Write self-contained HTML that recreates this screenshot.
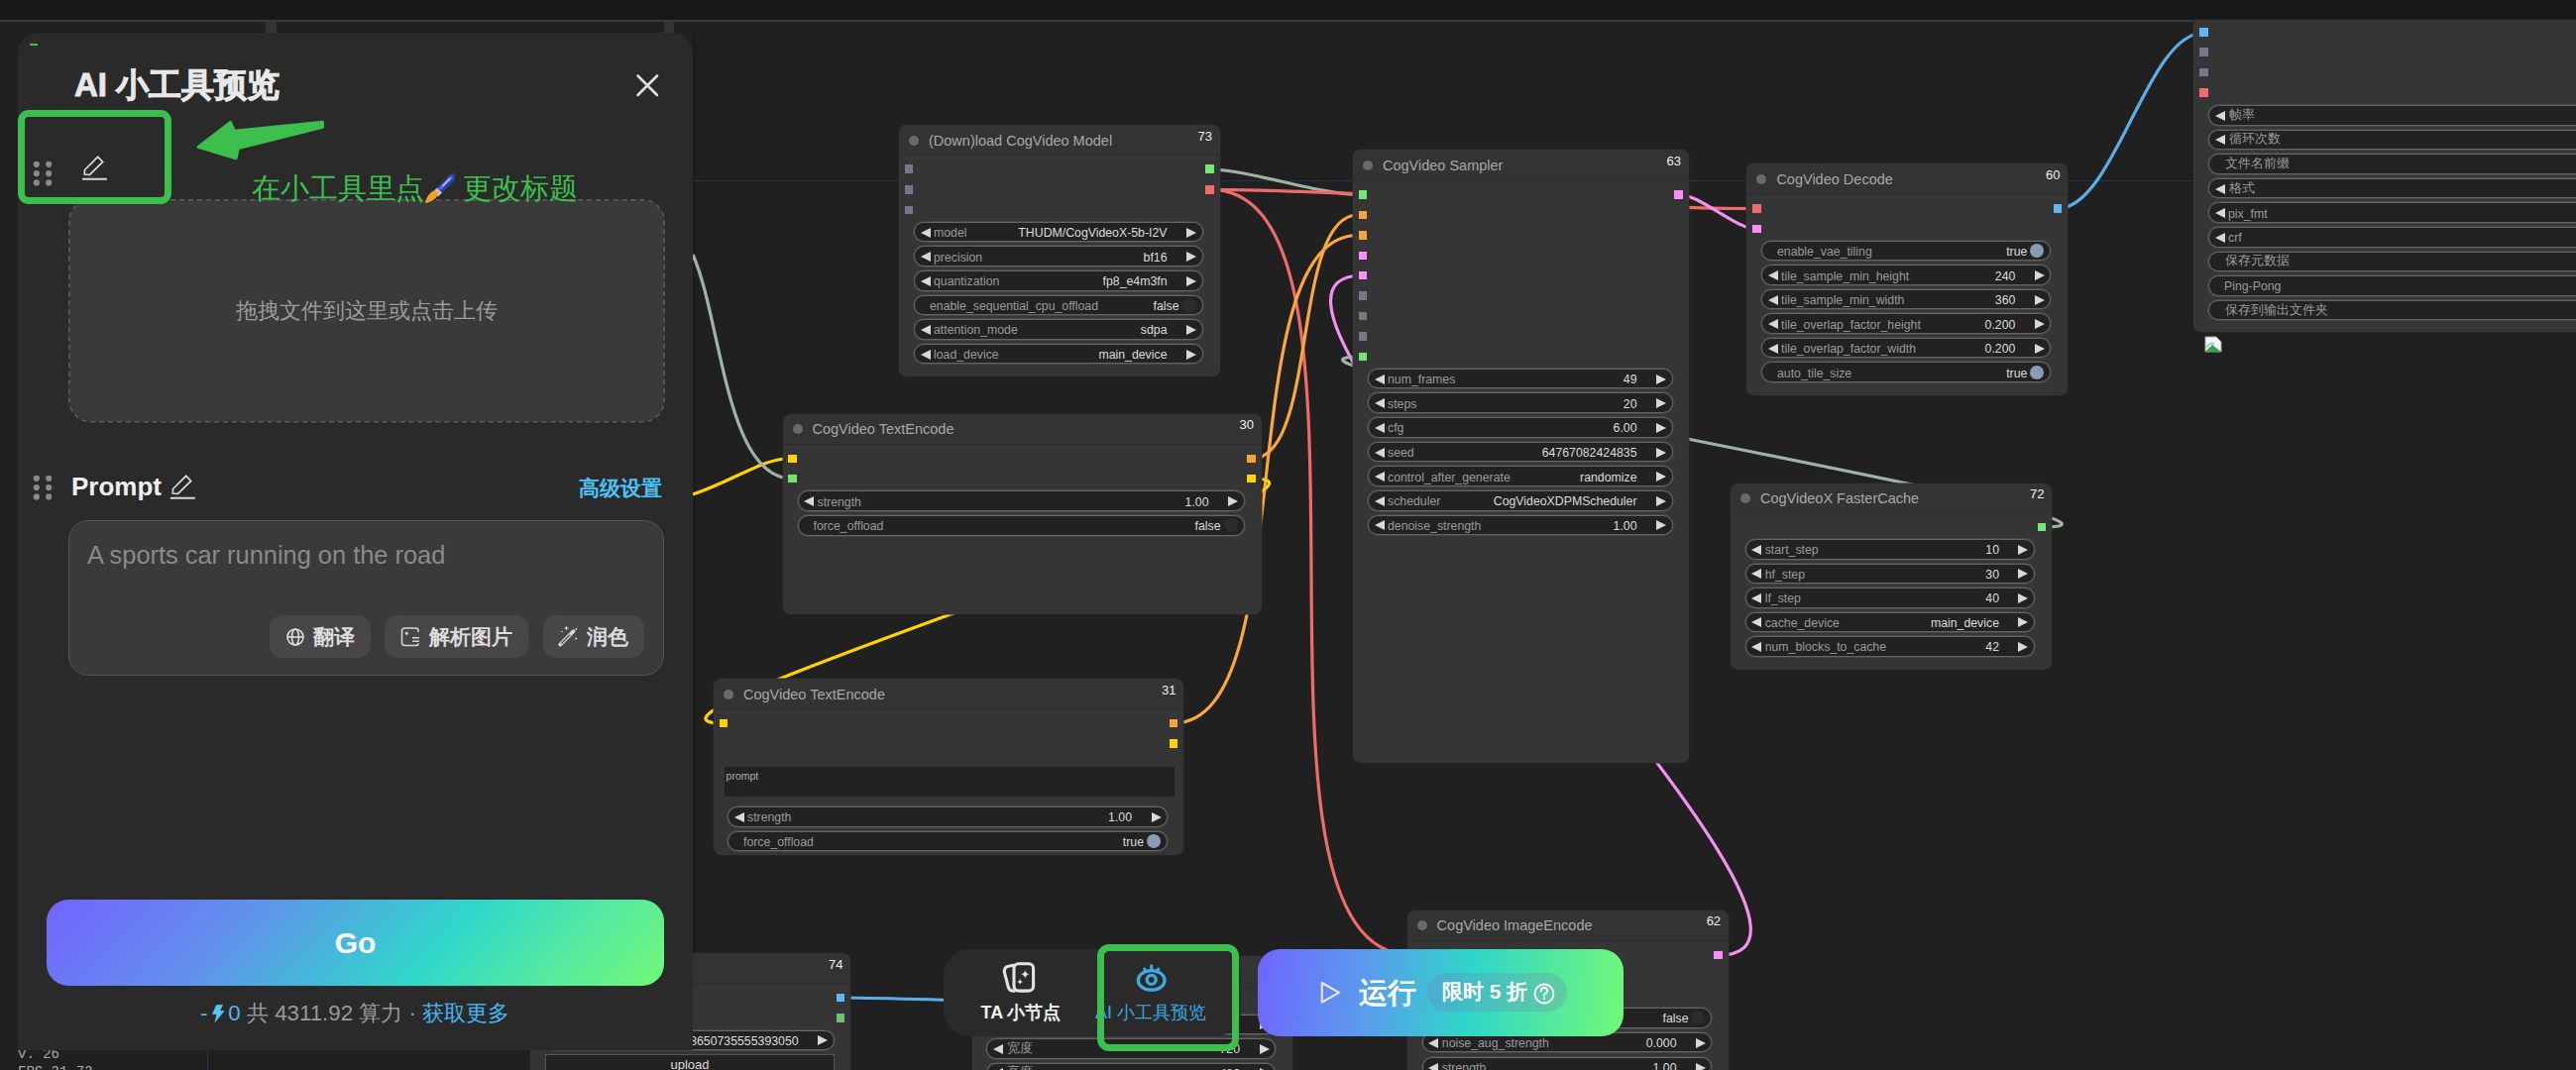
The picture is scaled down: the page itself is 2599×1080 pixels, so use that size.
<!DOCTYPE html><html><head><meta charset="utf-8"><style>
*{box-sizing:border-box;margin:0;padding:0}
html,body{width:2599px;height:1080px;overflow:hidden;background:#202020;font-family:"Liberation Sans", sans-serif}
.abs{position:absolute}
.node{position:absolute;background:#353535;border-radius:8px;overflow:hidden;box-shadow:0 0 0 0.5px #2a2a2a}
.ttl{position:absolute;left:0;top:0;right:0;background:#333333;border-bottom:1px solid #2c2c2c}
.dot{position:absolute;width:10px;height:10px;border-radius:50%;background:#6a6a6a}
.tt{position:absolute;font-size:14.5px;color:#a8a8a8;white-space:nowrap;line-height:18px}
.nid{position:absolute;font-size:13px;color:#f0f0f0;line-height:16px;margin-right:-1.5px}
.slot{position:absolute;width:8.5px;height:8.5px}
.wg{position:absolute;background:#222;border:1px solid #646464;box-shadow:0 0 0 0.7px rgba(85,85,85,0.7);border-radius:11px;font-size:12.3px;color:#9a9a9a;white-space:nowrap}
.wl{position:absolute;top:50%;margin-top:-6px;line-height:14px}
.wv{position:absolute;top:50%;margin-top:-6px;color:#dcdcdc;line-height:14px}
.la{position:absolute;left:5.5px;top:50%;margin-top:-4.5px;width:0;height:0;border-top:5px solid transparent;border-bottom:5px solid transparent;border-right:10px solid #d8d8d8}
.ra{position:absolute;right:5.5px;top:50%;margin-top:-4.5px;width:0;height:0;border-top:5px solid transparent;border-bottom:5px solid transparent;border-left:10px solid #d8d8d8}
.tg{position:absolute;right:6px;top:50%;margin-top:-7px;width:14px;height:14px;border-radius:50%}
</style></head><body>

<div class="abs" style="left:0;top:0;width:2599px;height:20px;background:#181818"></div>
<div class="abs" style="left:0;top:20px;width:2599px;height:2px;background:#3a3a3a"></div>
<div class="abs" style="left:699px;top:33px;width:3px;height:1026px;background:#1c1c1c"></div>
<div class="abs" style="left:699px;top:182px;width:1520px;height:1px;background:#1f3550"></div>
<div class="abs" style="left:209px;top:1059px;width:1px;height:21px;background:#1f3550"></div>
<svg class="abs" style="left:0;top:0" width="2599" height="1080">
<path d="M1221,171 C1258.78736561339,171 1332.21263438661,196.4 1370,196.4" stroke="#9fb3a3" stroke-width="3.2" fill="none"/>
<path d="M1221,191.4 C1357.833340692245,191.4 1631.166659307755,210.5 1768,210.5" stroke="#f06a6a" stroke-width="3.2" fill="none"/>
<path d="M1221,191.4 C1420.7696736244018,191.4 1225.2303263755982,964 1425,964" stroke="#f06a6a" stroke-width="3.2" fill="none"/>
<path d="M1263,463 C1330.0657326807066,463 1302.9342673192934,217 1370,217" stroke="#f9a73e" stroke-width="3.2" fill="none"/>
<path d="M1184,730 C1315.6131286194504,730 1238.3868713805496,237.5 1370,237.5" stroke="#f9a73e" stroke-width="3.2" fill="none"/>
<path d="M1263,483 C1409.9760290829768,483 582.5239709170233,730 729.5,730" stroke="#ffd200" stroke-width="3.2" fill="none"/>
<path d="M699,499 C740,485 770,463 795,463" stroke="#ffd200" stroke-width="3.2" fill="none"/>
<path d="M699,257 C728,322 732,483 799,483" stroke="#9fb3a3" stroke-width="3.2" fill="none"/>
<path d="M1734,964 C1927.5763431439905,964 1181.3236568560096,278 1374.9,278" stroke="#f590f0" stroke-width="3.2" fill="none"/>
<path d="M2060,532 C2236.5902761337666,532 1198.3097238662333,360 1374.9,360" stroke="#9fb3a3" stroke-width="3.2" fill="none"/>
<path d="M1694,196.4 C1715.332428366222,196.4 1750.667571633778,231 1772,231" stroke="#f590f0" stroke-width="3.2" fill="none"/>
<path d="M2076,210.5 C2133.6966745142213,210.5 2165.8033254857787,33 2223.5,33" stroke="#5aaee8" stroke-width="3.2" fill="none"/>
<path d="M848,1007 C886.0074005951473,1007 961.9925994048527,1010 1000,1010" stroke="#5aaee8" stroke-width="3.2" fill="none"/>
</svg>
<div class="node" style="left:535.0px;top:962.0px;width:323.0px;height:138.0px">
<div class="ttl" style="height:31.5px"></div>
<div class="nid" style="right:9px;top:3.8px">74</div>
</div>
<div class="slot" style="left:843.75px;top:1002.75px;background:#64b5f6"></div>
<div class="slot" style="left:843.75px;top:1023.25px;background:#6cc46c"></div>
<div class="wg" style="left:550.0px;top:1039.5px;width:291.6px;height:20.5px">
<span class="wv" style="right:35px">3650735555393050</span><div class="ra"></div>
</div>
<div class="abs" style="left:550px;top:1064px;width:292px;height:30px;background:#222;border:1px solid #555;color:#ddd;font-size:13px;text-align:center;line-height:14px;padding-top:2.5px">upload</div>
<div class="node" style="left:981.0px;top:965.0px;width:323.0px;height:135.0px">
<div class="ttl" style="height:33.0px"></div>
</div>
<div class="wg" style="left:995.0px;top:1023.5px;width:292.0px;height:20.5px">
<div class="la"></div><span class="wl" style="left:19px"></span><span class="wv" style="right:35px"></span><div class="ra"></div>
</div>
<div class="wg" style="left:995.0px;top:1048.0px;width:292.0px;height:20.5px">
<div class="la"></div><span class="wl" style="left:19px;margin-top:-7.5px;font-size:12.7px;margin-left:1px">宽度</span><span class="wv" style="right:35px">720</span><div class="ra"></div>
</div>
<div class="wg" style="left:995.0px;top:1072.5px;width:292.0px;height:20.5px">
<div class="la"></div><span class="wl" style="left:19px;margin-top:-7.5px;font-size:12.7px;margin-left:1px">高度</span><span class="wv" style="right:35px">480</span><div class="ra"></div>
</div>
<div class="node" style="left:907.0px;top:126.0px;width:323.5px;height:254.0px">
<div class="ttl" style="height:31.0px"></div>
<div class="dot" style="left:10px;top:10.5px"></div><div class="tt" style="left:30px;top:6.5px">(Down)load CogVideo Model</div>
<div class="nid" style="right:9px;top:3.5px">73</div>
</div>
<div class="slot" style="left:912.75px;top:166.45px;background:#777788"></div>
<div class="slot" style="left:912.75px;top:187.05px;background:#777788"></div>
<div class="slot" style="left:912.75px;top:207.65px;background:#777788"></div>
<div class="slot" style="left:1216.25px;top:166.45px;background:#72e872"></div>
<div class="slot" style="left:1216.25px;top:187.05px;background:#f36b6b"></div>
<div class="wg" style="left:922.0px;top:223.8px;width:291.5px;height:20.5px">
<div class="la"></div><span class="wl" style="left:19px">model</span><span class="wv" style="right:35px">THUDM/CogVideoX-5b-I2V</span><div class="ra"></div>
</div>
<div class="wg" style="left:922.0px;top:248.4px;width:291.5px;height:20.5px">
<div class="la"></div><span class="wl" style="left:19px">precision</span><span class="wv" style="right:35px">bf16</span><div class="ra"></div>
</div>
<div class="wg" style="left:922.0px;top:273.0px;width:291.5px;height:20.5px">
<div class="la"></div><span class="wl" style="left:19px">quantization</span><span class="wv" style="right:35px">fp8_e4m3fn</span><div class="ra"></div>
</div>
<div class="wg" style="left:922.0px;top:297.6px;width:291.5px;height:20.5px">
<span class="wl" style="left:15px">enable_sequential_cpu_offload</span><span class="wv" style="right:23px">false</span><div class="tg" style="background:#2c2c2c"></div>
</div>
<div class="wg" style="left:922.0px;top:322.2px;width:291.5px;height:20.5px">
<div class="la"></div><span class="wl" style="left:19px">attention_mode</span><span class="wv" style="right:35px">sdpa</span><div class="ra"></div>
</div>
<div class="wg" style="left:922.0px;top:346.8px;width:291.5px;height:20.5px">
<div class="la"></div><span class="wl" style="left:19px">load_device</span><span class="wv" style="right:35px">main_device</span><div class="ra"></div>
</div>
<div class="node" style="left:789.5px;top:418.0px;width:483.0px;height:202.0px">
<div class="ttl" style="height:30.5px"></div>
<div class="dot" style="left:10px;top:10.2px"></div><div class="tt" style="left:30px;top:6.2px">CogVideo TextEncode</div>
<div class="nid" style="right:9px;top:3.2px">30</div>
</div>
<div class="slot" style="left:795.25px;top:458.55px;background:#ffd400"></div>
<div class="slot" style="left:795.25px;top:478.95px;background:#72e872"></div>
<div class="slot" style="left:1258.25px;top:458.55px;background:#f9a43a"></div>
<div class="slot" style="left:1258.25px;top:478.95px;background:#ffd400"></div>
<div class="wg" style="left:804.5px;top:495.4px;width:451.0px;height:20.5px">
<div class="la"></div><span class="wl" style="left:19px">strength</span><span class="wv" style="right:35px">1.00</span><div class="ra"></div>
</div>
<div class="wg" style="left:804.5px;top:520.2px;width:451.0px;height:20.5px">
<span class="wl" style="left:15px">force_offload</span><span class="wv" style="right:23px">false</span><div class="tg" style="background:#2c2c2c"></div>
</div>
<div class="node" style="left:720.0px;top:685.0px;width:474.0px;height:178.0px">
<div class="ttl" style="height:32.0px"></div>
<div class="dot" style="left:10px;top:11.0px"></div><div class="tt" style="left:30px;top:7.0px">CogVideo TextEncode</div>
<div class="nid" style="right:9px;top:4.0px">31</div>
</div>
<div class="slot" style="left:725.75px;top:725.65px;background:#ffd400"></div>
<div class="slot" style="left:1179.75px;top:725.65px;background:#f9a43a"></div>
<div class="slot" style="left:1179.75px;top:746.35px;background:#ffd400"></div>
<div class="wg" style="left:734.0px;top:814.0px;width:444.0px;height:20.5px">
<div class="la"></div><span class="wl" style="left:19px">strength</span><span class="wv" style="right:35px">1.00</span><div class="ra"></div>
</div>
<div class="wg" style="left:734.0px;top:838.8px;width:444.0px;height:20.5px">
<span class="wl" style="left:15px">force_offload</span><span class="wv" style="right:23px">true</span><div class="tg" style="background:#8a9cb5"></div>
</div>
<div class="abs" style="left:730.6px;top:774.2px;width:454.4px;height:30.3px;background:#222;color:#aaa;font-size:10.5px;padding:3px 0 0 2px;line-height:12px">prompt</div>
<div class="node" style="left:1365.0px;top:151.0px;width:338.5px;height:619.0px">
<div class="ttl" style="height:32.0px"></div>
<div class="dot" style="left:10px;top:11.0px"></div><div class="tt" style="left:30px;top:7.0px">CogVideo Sampler</div>
<div class="nid" style="right:9px;top:4.0px">63</div>
</div>
<div class="slot" style="left:1370.75px;top:192.15px;background:#72e872"></div>
<div class="slot" style="left:1370.75px;top:212.75px;background:#f9a43a"></div>
<div class="slot" style="left:1370.75px;top:233.15px;background:#f9a43a"></div>
<div class="slot" style="left:1370.75px;top:253.55px;background:#f98ef9"></div>
<div class="slot" style="left:1370.75px;top:273.95px;background:#f98ef9"></div>
<div class="slot" style="left:1370.75px;top:294.35px;background:#777788"></div>
<div class="slot" style="left:1370.75px;top:314.75px;background:#777788"></div>
<div class="slot" style="left:1370.75px;top:335.15px;background:#777788"></div>
<div class="slot" style="left:1370.75px;top:355.75px;background:#72e872"></div>
<div class="slot" style="left:1689.25px;top:192.15px;background:#f98ef9"></div>
<div class="wg" style="left:1380.0px;top:371.8px;width:307.5px;height:20.5px">
<div class="la"></div><span class="wl" style="left:19px">num_frames</span><span class="wv" style="right:35px">49</span><div class="ra"></div>
</div>
<div class="wg" style="left:1380.0px;top:396.4px;width:307.5px;height:20.5px">
<div class="la"></div><span class="wl" style="left:19px">steps</span><span class="wv" style="right:35px">20</span><div class="ra"></div>
</div>
<div class="wg" style="left:1380.0px;top:421.1px;width:307.5px;height:20.5px">
<div class="la"></div><span class="wl" style="left:19px">cfg</span><span class="wv" style="right:35px">6.00</span><div class="ra"></div>
</div>
<div class="wg" style="left:1380.0px;top:445.8px;width:307.5px;height:20.5px">
<div class="la"></div><span class="wl" style="left:19px">seed</span><span class="wv" style="right:35px">64767082424835</span><div class="ra"></div>
</div>
<div class="wg" style="left:1380.0px;top:470.4px;width:307.5px;height:20.5px">
<div class="la"></div><span class="wl" style="left:19px">control_after_generate</span><span class="wv" style="right:35px">randomize</span><div class="ra"></div>
</div>
<div class="wg" style="left:1380.0px;top:495.1px;width:307.5px;height:20.5px">
<div class="la"></div><span class="wl" style="left:19px">scheduler</span><span class="wv" style="right:35px">CogVideoXDPMScheduler</span><div class="ra"></div>
</div>
<div class="wg" style="left:1380.0px;top:519.7px;width:307.5px;height:20.5px">
<div class="la"></div><span class="wl" style="left:19px">denoise_strength</span><span class="wv" style="right:35px">1.00</span><div class="ra"></div>
</div>
<div class="node" style="left:1762.4px;top:165.4px;width:323.6px;height:233.6px">
<div class="ttl" style="height:31.9px"></div>
<div class="dot" style="left:10px;top:11.0px"></div><div class="tt" style="left:30px;top:7.0px">CogVideo Decode</div>
<div class="nid" style="right:9px;top:4.0px">60</div>
</div>
<div class="slot" style="left:1768.15px;top:206.25px;background:#f36b6b"></div>
<div class="slot" style="left:1768.15px;top:226.95px;background:#f98ef9"></div>
<div class="slot" style="left:2071.75px;top:206.25px;background:#64b5f6"></div>
<div class="wg" style="left:1777.0px;top:242.8px;width:292.4px;height:20.5px">
<span class="wl" style="left:15px">enable_vae_tiling</span><span class="wv" style="right:23px">true</span><div class="tg" style="background:#8a9cb5"></div>
</div>
<div class="wg" style="left:1777.0px;top:267.3px;width:292.4px;height:20.5px">
<div class="la"></div><span class="wl" style="left:19px">tile_sample_min_height</span><span class="wv" style="right:35px">240</span><div class="ra"></div>
</div>
<div class="wg" style="left:1777.0px;top:291.8px;width:292.4px;height:20.5px">
<div class="la"></div><span class="wl" style="left:19px">tile_sample_min_width</span><span class="wv" style="right:35px">360</span><div class="ra"></div>
</div>
<div class="wg" style="left:1777.0px;top:316.3px;width:292.4px;height:20.5px">
<div class="la"></div><span class="wl" style="left:19px">tile_overlap_factor_height</span><span class="wv" style="right:35px">0.200</span><div class="ra"></div>
</div>
<div class="wg" style="left:1777.0px;top:340.8px;width:292.4px;height:20.5px">
<div class="la"></div><span class="wl" style="left:19px">tile_overlap_factor_width</span><span class="wv" style="right:35px">0.200</span><div class="ra"></div>
</div>
<div class="wg" style="left:1777.0px;top:365.3px;width:292.4px;height:20.5px">
<span class="wl" style="left:15px">auto_tile_size</span><span class="wv" style="right:23px">true</span><div class="tg" style="background:#8a9cb5"></div>
</div>
<div class="node" style="left:1746.0px;top:487.5px;width:324.0px;height:188.5px">
<div class="ttl" style="height:31.2px"></div>
<div class="dot" style="left:10px;top:10.6px"></div><div class="tt" style="left:30px;top:6.6px">CogVideoX FasterCache</div>
<div class="nid" style="right:9px;top:3.6px">72</div>
</div>
<div class="slot" style="left:2055.75px;top:527.75px;background:#72e872"></div>
<div class="wg" style="left:1760.7px;top:544.2px;width:292.3px;height:20.5px">
<div class="la"></div><span class="wl" style="left:19px">start_step</span><span class="wv" style="right:35px">10</span><div class="ra"></div>
</div>
<div class="wg" style="left:1760.7px;top:568.7px;width:292.3px;height:20.5px">
<div class="la"></div><span class="wl" style="left:19px">hf_step</span><span class="wv" style="right:35px">30</span><div class="ra"></div>
</div>
<div class="wg" style="left:1760.7px;top:593.2px;width:292.3px;height:20.5px">
<div class="la"></div><span class="wl" style="left:19px">lf_step</span><span class="wv" style="right:35px">40</span><div class="ra"></div>
</div>
<div class="wg" style="left:1760.7px;top:617.7px;width:292.3px;height:20.5px">
<div class="la"></div><span class="wl" style="left:19px">cache_device</span><span class="wv" style="right:35px">main_device</span><div class="ra"></div>
</div>
<div class="wg" style="left:1760.7px;top:642.2px;width:292.3px;height:20.5px">
<div class="la"></div><span class="wl" style="left:19px">num_blocks_to_cache</span><span class="wv" style="right:35px">42</span><div class="ra"></div>
</div>
<div class="node" style="left:1419.6px;top:918.8px;width:324.0px;height:181.2px">
<div class="ttl" style="height:30.8px"></div>
<div class="dot" style="left:10px;top:10.4px"></div><div class="tt" style="left:30px;top:6.4px">CogVideo ImageEncode</div>
<div class="nid" style="right:9px;top:3.4px">62</div>
</div>
<div class="slot" style="left:1425.35px;top:959.75px;background:#f36b6b"></div>
<div class="slot" style="left:1425.35px;top:980.25px;background:#64b5f6"></div>
<div class="slot" style="left:1729.35px;top:959.55px;background:#f98ef9"></div>
<div class="wg" style="left:1434.8px;top:1017.0px;width:292.7px;height:20.5px">
<span class="wl" style="left:15px"></span><span class="wv" style="right:23px">false</span><div class="tg" style="background:#2c2c2c"></div>
</div>
<div class="wg" style="left:1434.8px;top:1041.9px;width:292.7px;height:20.5px">
<div class="la"></div><span class="wl" style="left:19px">noise_aug_strength</span><span class="wv" style="right:35px">0.000</span><div class="ra"></div>
</div>
<div class="wg" style="left:1434.8px;top:1066.8px;width:292.7px;height:20.5px">
<div class="la"></div><span class="wl" style="left:19px">strength</span><span class="wv" style="right:35px">1.00</span><div class="ra"></div>
</div>
<div class="node" style="left:2213px;top:20px;width:420px;height:315px;border-radius:0 0 0 8px"></div>
<div class="slot" style="left:2219.25px;top:28.45px;background:#64b5f6"></div>
<div class="slot" style="left:2219.25px;top:48.25px;background:#777788"></div>
<div class="slot" style="left:2219.25px;top:68.75px;background:#777788"></div>
<div class="slot" style="left:2219.25px;top:89.25px;background:#f36b6b"></div>
<div class="wg" style="left:2228.0px;top:106.0px;width:412.0px;height:20.5px">
<div class="la"></div><span class="wl" style="left:19px;margin-top:-7.5px;font-size:12.7px;margin-left:1px">帧率</span>
</div>
<div class="wg" style="left:2228.0px;top:130.6px;width:412.0px;height:20.5px">
<div class="la"></div><span class="wl" style="left:19px;margin-top:-7.5px;font-size:12.7px;margin-left:1px">循环次数</span>
</div>
<div class="wg" style="left:2228.0px;top:155.2px;width:412.0px;height:20.5px">
<span class="wl" style="left:15px;margin-top:-7.5px;font-size:12.7px;margin-left:1px">文件名前缀</span>
</div>
<div class="wg" style="left:2228.0px;top:179.8px;width:412.0px;height:20.5px">
<div class="la"></div><span class="wl" style="left:19px;margin-top:-7.5px;font-size:12.7px;margin-left:1px">格式</span>
</div>
<div class="wg" style="left:2228.0px;top:204.4px;width:412.0px;height:20.5px">
<div class="la"></div><span class="wl" style="left:19px">pix_fmt</span>
</div>
<div class="wg" style="left:2228.0px;top:229.0px;width:412.0px;height:20.5px">
<div class="la"></div><span class="wl" style="left:19px">crf</span>
</div>
<div class="wg" style="left:2228.0px;top:253.6px;width:412.0px;height:20.5px">
<span class="wl" style="left:15px;margin-top:-7.5px;font-size:12.7px;margin-left:1px">保存元数据</span>
</div>
<div class="wg" style="left:2228.0px;top:278.2px;width:412.0px;height:20.5px">
<span class="wl" style="left:15px">Ping-Pong</span>
</div>
<div class="wg" style="left:2228.0px;top:302.8px;width:412.0px;height:20.5px">
<span class="wl" style="left:15px;margin-top:-7.5px;font-size:12.7px;margin-left:1px">保存到输出文件夹</span>
</div>
<svg class="abs" style="left:2224px;top:339px" width="18" height="17"><path d="M1,1 H12 L17,6 V16 H1 Z" fill="#f4f4f4" stroke="#9aa" stroke-width="1"/><path d="M1,16 L8,9 L17,16 Z" fill="#3aa24a"/><path d="M2,12 Q6,6 10,8" fill="none" stroke="#9cd" stroke-width="2"/></svg>
<div class="abs" style="left:18px;top:1054.5px;font-family:'Liberation Mono',monospace;font-size:14px;color:#a8a8a8;line-height:18px">v. 26<br>FPS 31.73</div>
<div class="abs" style="left:268px;top:22px;width:11px;height:11px;background:#333"></div>
<div class="abs" style="left:670px;top:22px;width:10px;height:11px;background:#333"></div>
<div class="abs" style="left:18px;top:33px;width:681px;height:1027px;background:#2a2a2a;border-radius:21px 21px 0 0"></div>
<div class="abs" style="left:30px;top:44px;width:8px;height:2px;background:#3cc04e"></div>
<div class="abs" style="left:75px;top:65.5px;font-size:33px;font-weight:bold;color:#e8e8e8;-webkit-text-stroke:0.9px #e8e8e8;line-height:40px;white-space:nowrap">AI 小工具预览</div>
<svg class="abs" style="left:640px;top:73px" width="26" height="26"><path d="M3.5,3.5 L23,23 M23,3.5 L3.5,23" stroke="#dedede" stroke-width="2.6" stroke-linecap="round"/></svg>
<svg class="abs" style="left:33px;top:162px" width="22" height="28"><circle cx="3.8" cy="3.8" r="3.1" fill="#8a8a8a"/><circle cx="16.2" cy="3.8" r="3.1" fill="#8a8a8a"/><circle cx="3.8" cy="13.1" r="3.1" fill="#8a8a8a"/><circle cx="16.2" cy="13.1" r="3.1" fill="#8a8a8a"/><circle cx="3.8" cy="22.4" r="3.1" fill="#8a8a8a"/><circle cx="16.2" cy="22.4" r="3.1" fill="#8a8a8a"/></svg>
<svg class="abs" style="left:33px;top:479px" width="22" height="28"><circle cx="3.8" cy="3.8" r="3.1" fill="#8a8a8a"/><circle cx="16.2" cy="3.8" r="3.1" fill="#8a8a8a"/><circle cx="3.8" cy="13.1" r="3.1" fill="#8a8a8a"/><circle cx="16.2" cy="13.1" r="3.1" fill="#8a8a8a"/><circle cx="3.8" cy="22.4" r="3.1" fill="#8a8a8a"/><circle cx="16.2" cy="22.4" r="3.1" fill="#8a8a8a"/></svg>
<svg class="abs" style="left:81px;top:156px" width="28" height="28" viewBox="0 0 28 28"><path d="M4.3,20 L4.5,15.5 L17.7,2.3 L22.7,7.4 L9.5,20.3 Z" fill="none" stroke="#d8d8d8" stroke-width="1.7" stroke-linejoin="miter"/><path d="M2.7,24.7 H26.1" stroke="#d8d8d8" stroke-width="1.9" stroke-linecap="round"/></svg>
<svg class="abs" style="left:170px;top:478px" width="28" height="28" viewBox="0 0 28 28"><path d="M4.3,20 L4.5,15.5 L17.7,2.3 L22.7,7.4 L9.5,20.3 Z" fill="none" stroke="#d8d8d8" stroke-width="1.7" stroke-linejoin="miter"/><path d="M2.7,24.7 H26.1" stroke="#d8d8d8" stroke-width="1.9" stroke-linecap="round"/></svg>
<svg class="abs" style="left:69px;top:201px" width="602" height="226"><rect x="0.75" y="0.75" width="600.5" height="224" rx="22" fill="#3a3a3a" stroke="#5c5c5c" stroke-width="1.5" stroke-dasharray="5 3.93"/></svg>
<div class="abs" style="left:69px;top:299px;width:601px;text-align:center;font-size:21.7px;color:#9c9c9c;line-height:30px">拖拽文件到这里或点击上传</div>
<div class="abs" style="left:18px;top:111px;width:155px;height:95px;border:7px solid #3cbf4c;border-radius:11px"></div>
<svg class="abs" style="left:190px;top:110px" width="150" height="60"><path d="M10,38.4 L42.5,13.5 L46.5,22.3 L135.5,13.2 L135.5,18.3 L50.6,39.5 L48,49.8 Z" fill="#3cbf4c" stroke="#3cbf4c" stroke-width="3" stroke-linejoin="round"/></svg>
<div class="abs" style="left:254px;top:172px;font-size:28.5px;color:#3cc04e;line-height:36px;white-space:nowrap">在小工具里点<span style="display:inline-block;width:31px"></span> 更改标题</div>
<svg class="abs" style="left:427px;top:175px" width="32" height="32" viewBox="0 0 32 32"><path d="M29.5,4 L15,18.5" stroke="#2c3e9e" stroke-width="7.5" stroke-linecap="round"/><path d="M28.3,4.3 L17.5,15" stroke="#5b74e0" stroke-width="3" stroke-linecap="round"/><path d="M26.8,5.5 L20,12.3" stroke="#b8c8ff" stroke-width="1.3" stroke-linecap="round"/><path d="M16.5,17 L12.5,21" stroke="#c0c0c0" stroke-width="7" stroke-linecap="butt"/><path d="M13.5,18.5 Q16,21 13,24.5 Q8,29 1.8,30.2 Q3,24 7.5,19.5 Q10.8,16.2 13.5,18.5 Z" fill="#f0a224"/></svg>
<div class="abs" style="left:72px;top:476px;font-size:26px;font-weight:bold;color:#efefef;line-height:30px">Prompt</div>
<div class="abs" style="left:583.5px;top:478px;font-size:21.3px;font-weight:bold;color:#4cc2f6;line-height:30px;white-space:nowrap">高级设置</div>
<div class="abs" style="left:69px;top:525px;width:601px;height:157px;background:#3a3a3a;border:1.5px solid #545454;border-radius:20px"></div>
<div class="abs" style="left:88px;top:545px;font-size:25.4px;color:#8a8a8a;line-height:30px;white-space:nowrap">A sports car running on the road</div>
<div class="abs" style="left:272px;top:621px;width:102px;height:43px;background:#474747;border-radius:13px"></div>
<svg class="abs" style="left:288px;top:633px" width="20" height="20"><circle cx="10" cy="10" r="8" fill="none" stroke="#ddd" stroke-width="1.6"/><ellipse cx="10" cy="10" rx="3.5" ry="8" fill="none" stroke="#ddd" stroke-width="1.6"/><path d="M2,10 H18" stroke="#ddd" stroke-width="1.6"/></svg>
<div class="abs" style="left:272px;top:621px;width:102px;padding-left:28px;text-align:center;font-size:21px;font-weight:bold;color:#dcdcdc;line-height:43px;white-space:nowrap">翻译</div>
<div class="abs" style="left:388px;top:621px;width:145px;height:43px;background:#474747;border-radius:13px"></div>
<svg class="abs" style="left:404px;top:632px" width="21" height="21"><path d="M18,6 V4.5 Q18,2 15.5,2 H4.5 Q1.5,2 1.5,5 V16.5 Q1.5,19.5 4.5,19.5 H15.5 Q18,19.5 18.5,17.5" fill="none" stroke="#d6d6d6" stroke-width="1.5"/><circle cx="6.3" cy="7.3" r="1.5" fill="#d6d6d6"/><path d="M12,11.8 H19 M12,15.3 H19" stroke="#d6d6d6" stroke-width="1.5"/></svg>
<div class="abs" style="left:388px;top:621px;width:145px;padding-left:28px;text-align:center;font-size:21px;font-weight:bold;color:#dcdcdc;line-height:43px;white-space:nowrap">解析图片</div>
<div class="abs" style="left:548px;top:621px;width:102px;height:43px;background:#474747;border-radius:13px"></div>
<svg class="abs" style="left:560px;top:630px" width="24" height="24"><path d="M5.2,20.6 L18.6,7.2" stroke="#d6d6d6" stroke-width="3.8" stroke-linecap="round"/><path d="M6.3,19.5 L15.2,10.6" stroke="#474747" stroke-width="1.3"/><path d="M11.5,1.5 L12.2,3.3 L14,4 L12.2,4.7 L11.5,6.5 L10.8,4.7 L9,4 L10.8,3.3 Z" fill="#d6d6d6"/><circle cx="21.3" cy="5" r="0.9" fill="#d6d6d6"/><circle cx="21.2" cy="14.6" r="1" fill="#d6d6d6"/><circle cx="7" cy="7.5" r="0.8" fill="#d6d6d6"/></svg>
<div class="abs" style="left:548px;top:621px;width:102px;padding-left:28px;text-align:center;font-size:21px;font-weight:bold;color:#dcdcdc;line-height:43px;white-space:nowrap">润色</div>
<div class="abs" style="left:47px;top:908px;width:623px;height:87px;border-radius:22px;background:linear-gradient(133deg,#7264ff 0%,#6290ec 30%,#2fd8ca 63%,#55eaa0 82%,#72f878 100%)"></div>
<div class="abs" style="left:47px;top:908px;width:623px;height:87px;text-align:center;font-size:30px;font-weight:bold;color:#fff;line-height:87px">Go</div>
<div class="abs" style="left:0;top:1008px;width:716px;text-align:center;font-size:22.3px;line-height:30px;white-space:nowrap;color:#9a9a9a"><span style="color:#4fb8f0">-<svg width="14" height="18" viewBox="0 0 14 18" style="vertical-align:-2px;margin:0 3px 0 4px"><path d="M5.5,0.5 H11.5 L8.5,6.5 H13 L4,17.5 L6,9.5 H1.5 Z" fill="#4fc6f5" stroke="#4fc6f5" stroke-width="0.8" stroke-linejoin="round"/></svg>0</span> 共 4311.92 算力 · <span style="color:#45b5ef">获取更多</span></div>
<div class="abs" style="left:952px;top:958px;width:300px;height:87.5px;background:#2a2a2a;border-radius:26px"></div>
<svg class="abs" style="left:1008px;top:968px" width="40" height="36" viewBox="0 0 40 36"><path d="M15,6.3 L9.5,7.3 Q5,8.3 5.3,13 L9.3,28.3 Q10.5,32.5 15.5,32.3" fill="none" stroke="#e2e2e2" stroke-width="3.1" stroke-linecap="round"/><rect x="15" y="4.8" width="19.6" height="27.3" rx="4.6" fill="none" stroke="#e2e2e2" stroke-width="3.1"/><path d="M26.3,11 Q26.9,14.7 30.6,15.3 Q26.9,15.9 26.3,19.6 Q25.7,15.9 22,15.3 Q25.7,14.7 26.3,11 Z" fill="#e2e2e2"/><path d="M21.1,20.1 Q21.5,22.5 23.9,22.9 Q21.5,23.3 21.1,25.7 Q20.7,23.3 18.3,22.9 Q20.7,22.5 21.1,20.1 Z" fill="#e2e2e2"/></svg>
<div class="abs" style="left:975px;top:1007px;width:110px;text-align:center;font-size:18px;font-weight:bold;color:#f2f2f2;line-height:30px;white-space:nowrap">TA 小节点</div>
<svg class="abs" style="left:1144px;top:970px" width="36" height="34" viewBox="0 0 36 34"><ellipse cx="17.7" cy="19.4" rx="13.4" ry="9.8" fill="none" stroke="#3dabe0" stroke-width="3.3"/><circle cx="17.7" cy="18.9" r="4.5" fill="none" stroke="#3dabe0" stroke-width="3.3"/><path d="M17.7,4.8 V8.5 M10.6,8 L11.4,9.5 M24.8,8 L24,9.5" stroke="#3dabe0" stroke-width="3" stroke-linecap="round"/></svg>
<div class="abs" style="left:1101px;top:1007px;width:120px;text-align:center;font-size:18px;color:#3aa8e0;line-height:30px;white-space:nowrap">AI 小工具预览</div>
<div class="abs" style="left:1107px;top:953px;width:143px;height:108px;border:7px solid #3cbf4c;border-radius:12px"></div>
<div class="abs" style="left:1269px;top:958px;width:369px;height:87.5px;border-radius:22px;background:linear-gradient(96deg,#6f66ff 0%,#5a9cec 30%,#2fd6c9 58%,#72f878 100%)"></div>
<svg class="abs" style="left:1329px;top:989px" width="26" height="26"><path d="M4.8,3 L22,12.8 L4.8,22.6 Z" fill="none" stroke="#ede9ff" stroke-width="2.1" stroke-linejoin="round"/></svg>
<div class="abs" style="left:1371px;top:984px;font-size:28.5px;font-weight:bold;color:#fff;line-height:36px;white-space:nowrap">运行</div>
<div class="abs" style="left:1440px;top:982px;width:141px;height:39px;border-radius:20px;background:rgba(120,120,180,0.25)"></div>
<div class="abs" style="left:1455px;top:986px;font-size:21px;font-weight:bold;color:#fff;line-height:30px;white-space:nowrap">限时 5 折</div>
<svg class="abs" style="left:1546px;top:991px" width="24" height="24"><circle cx="12" cy="12" r="9.5" fill="none" stroke="#fff" stroke-width="1.8"/><path d="M8.8,9.5 Q8.8,6 12,6 Q15.2,6 15.2,9 Q15.2,11 12.5,12 Q12,12.3 12,14" fill="none" stroke="#fff" stroke-width="1.8" stroke-linecap="round"/><circle cx="12" cy="17" r="1.2" fill="#fff"/></svg>
</body></html>
